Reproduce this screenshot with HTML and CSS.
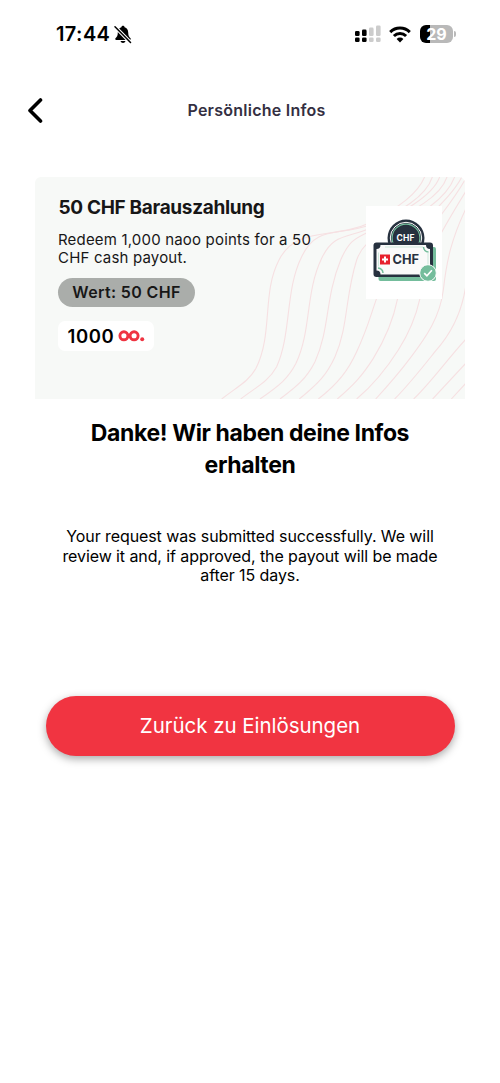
FILE: index.html
```html
<!DOCTYPE html>
<html lang="de">
<head>
<meta charset="utf-8">
<title>Persönliche Infos</title>
<link rel="stylesheet" href="styles.css">
</head>
<body>
<div class="status">
  <div class="clock"><span class="time">17:44</span>
    <svg class="bell" width="18" height="19" viewBox="0 0 18 19"><path d="M9 .8c-.9 0-1.500.6-1.600 1.400C5 3 3.800 5 3.800 7.500c0 3.500-1 4.500-2.300 5.800-.6.700-.2 1.700.7 1.700h13.600c.9 0 1.300-1 .7-1.700-1.300-1.300-2.300-2.300-2.300-5.800 0-2.500-1.200-4.500-3.600-5.300C10.500 1.400 9.900.8 9 .8z"/><path d="M6.500 16h5c-.3 1.300-1.300 2-2.500 2s-2.200-.7-2.500-2z"/><path d="M1 1.800l15.500 15.700" stroke="#fff" stroke-width="3.600"/><path d="M1 1.800l15.500 15.700" stroke="#000" stroke-width="1.500" stroke-linecap="round"/></svg>
  </div>
  <div class="indicators">
    <svg class="signal" width="26" height="18" viewBox="0 0 26 18"><g fill="#000"><rect x="0" y="6" width="4.600" height="5" rx="1.300"/><rect x="7" y="4.600" width="4.600" height="6.400" rx="1.300"/><rect x="0" y="12.500" width="4.600" height="4.600" rx="1.300"/><rect x="7" y="12.500" width="4.600" height="4.600" rx="1.300"/></g><g fill="#ccc"><rect x="14" y="2.600" width="4.600" height="8.400" rx="1.300"/><rect x="21" y="0.400" width="4.600" height="10.600" rx="1.300"/><rect x="14" y="12.500" width="4.600" height="4.600" rx="1.300"/><rect x="21" y="12.500" width="4.600" height="4.600" rx="1.300"/></g></svg>
    <svg class="wifi" width="22" height="17" viewBox="0 0 22 17"><g fill="none" stroke="#000" stroke-width="3"><path d="M1.200 6.100a14 14 0 0 1 19.600 0"/><path d="M4.900 10a8.700 8.700 0 0 1 12.200 0"/></g><path d="M11 16.400l-3.400-3.500a4.900 4.900 0 0 1 6.800 0z"/></svg>
    <div class="battery"><span class="level">29</span></div><i class="nub"></i>
  </div>
</div>
<header class="header">
  <svg class="back" width="16" height="26" viewBox="0 0 16 26"><path d="M13.500 3L3 13.500 13.500 24" fill="none" stroke="#000" stroke-width="3.600" stroke-linecap="round" stroke-linejoin="round"/></svg>
  <h1 class="title">Persönliche Infos</h1>
</header>
<main class="content">
  <section class="card">
    <svg class="waves" width="430" height="222" viewBox="35 177 430 222"><g transform="translate(210 170) scale(.33333)" fill="none" stroke="#f6e0e2" stroke-width="3.300">
      <path d="M35 687C85 648 115 635 138 595C190 490 155 370 207 270C260 165 370 210 480 158C570 110 625 70 645 18"/>
      <path d="M92 687C140 650 175 635 200 590C245 490 225 360 275 260C320 165 380 200 480 165C570 125 650 80 668 18"/>
      <path d="M150 687C210 645 235 625 258 580C305 480 285 370 335 265C370 190 410 205 480 175C570 130 670 80 690 18"/>
      <path d="M210 687C260 650 290 625 315 575C360 475 345 385 392 270C420 205 440 205 480 183C590 130 690 90 712 18"/>
      <path d="M268 687C325 640 350 615 375 560C415 470 405 380 440 270C460 215 490 210 540 180C620 140 710 90 735 18"/>
      <path d="M325 687C385 640 415 600 440 545C475 470 480 440 500 385C540 200 700 130 757 18"/>
      <path d="M382 687C430 645 455 620 490 565C530 500 550 450 563 385C600 220 705 140 768 24"/>
      <path d="M440 687C490 645 530 595 565 540C600 485 620 430 630 385C640 270 690 190 768 63"/>
      <path d="M497 687C540 640 570 605 600 565C650 500 690 440 700 360C710 270 725 205 768 115"/>
      <path d="M554 687C600 640 635 595 675 545C725 490 755 430 767 350"/>
      <path d="M611 687C665 635 710 570 768 507M668 687L768 579M724 687L768 639"/>
    </g></svg>
    <div class="info">
      <h2 class="name">50 CHF Barauszahlung</h2>
      <p class="desc">Redeem 1,000 naoo points for a 50<br>CHF cash payout.</p>
      <div class="value">Wert: 50 CHF</div>
      <div class="points"><span>1000</span><svg width="27" height="12" viewBox="0 0 27 12"><g fill="none" stroke="#ef3442" stroke-width="2.900"><circle cx="5.900" cy="5.800" r="4"/><circle cx="16.100" cy="5.800" r="4"/></g><circle cx="24.200" cy="9.200" r="2" fill="#ef3442"/></svg></div>
    </div>
    <svg class="voucher" width="76" height="93" viewBox="366 205.500 76 93"><path fill="#fff" d="M366 205h76v94h-76z"/>
      <circle cx="406" cy="237.500" r="18.500" fill="#27313f"/><circle cx="406" cy="237.500" r="15.700" fill="none" stroke="#fff" stroke-width="1"/><circle cx="406" cy="237.500" r="13.900" fill="none" stroke="#74bd9c" stroke-width="1.200"/>
      <path d="M395 233h22v8h-22z" fill="#27313f"/>
      <text x="405.600" y="240.200" class="coin-text">CHF</text>
      <rect x="378.500" y="246.500" width="57.500" height="34" rx="2" fill="#74bd9c"/>
      <rect x="373.500" y="242" width="59.500" height="34.500" rx="3" fill="#27313f"/>
      <path d="M380.500 244.500h45.500a4 4 0 0 0 4 4v21.500a4 4 0 0 0-4 4h-45.500a4 4 0 0 0-4-4v-21.500a4 4 0 0 0 4-4z" fill="#fafafa"/>
      <path d="M423.500 246.500a5.500 5.500 0 0 0 5 5M378 267.500a5.500 5.500 0 0 1 5 5" fill="none" stroke="#74bd9c" stroke-width="1.500"/>
      <path d="M378.500 266v-14M423 246.500h-38M428 252v14" stroke="#b9dfcf" stroke-width=".7"/>
      <rect x="380" y="254" width="10" height="10" fill="#e7202d"/><path d="M385 256v6M382 259h6" stroke="#fff" stroke-width="2"/>
      <text x="405.800" y="263.500" class="note-text">CHF</text>
      <circle cx="428" cy="272.500" r="8.300" fill="#74bd9c" stroke="#fff"/><path d="M424.200 272.600l2.700 2.700 5-5.500" fill="none" stroke="#fff" stroke-width="1.700"/>
    </svg>
  </section>
  <h2 class="thanks">Danke! Wir haben deine Infos<br>erhalten</h2>
  <p class="message">Your request was submitted successfully. We will<br>review it and, if approved, the payout will be made<br>after 15 days.</p>
  <button class="action">Zurück zu Einlösungen</button>
</main>
</body>
</html>
```
FILE: styles.css
```css
* { box-sizing: border-box; margin: 0; padding: 0; }
body { width: 500px; min-height: 1083px; background: #fff; color: #000; font-family: Inter, "Liberation Sans", sans-serif; }
svg { display: block; flex: none; }
.status { height: 68px; display: flex; justify-content: space-between; padding: 0 44px 0 56px; align-items: center; }
.clock { display: flex; align-items: center; gap: 4px; }
.time { font-size: 20px; font-weight: 600; line-height: 24px; letter-spacing: .4px; }
.indicators { display: flex; align-items: center; }
.wifi { margin: 0 9px 0 8px; }
.battery { width: 33px; height: 18px; border-radius: 6px; background: linear-gradient(90deg, #000 30%, #b9b9b9 30%); text-align: center; }
.level { color: #fff; font-size: 16px; line-height: 18px; font-weight: 700; display: block; }
.nub { width: 2px; height: 6px; background: #b9b9b9; border-radius: 0 2px 2px 0; margin-left: 1px; }
.header { height: 84px; display: grid; grid-template-columns: 60px 1fr 60px; align-items: center; padding: 0 14px 0 27px; }
.title { font-size: 16px; line-height: 20px; font-weight: 600; letter-spacing: .25px; color: #342f42; text-align: center; }
.content { padding: 25px 35px 0; }
.card { height: 221.500px; background: #f7f9f7; border-radius: 6px 6px 0 0; display: grid; grid-template-columns: 331px 76px; overflow: hidden; }
.waves, .info, .voucher { grid-row: 1; }
.waves { grid-column: 1 / 3; }
.info { grid-column: 1; padding: 18px 0 0 23px; z-index: 1; color: #171717; }
.voucher { grid-column: 2; margin-top: 28.500px; z-index: 1; }
.name { margin-left: .5px; font-size: 19px; line-height: 25px; font-weight: 700; letter-spacing: -.33px; white-space: nowrap; }
.desc { font-size: 15px; line-height: 18px; margin-top: 11px; letter-spacing: .18px; white-space: nowrap; }
.value { width: 137px; height: 29px; margin-top: 11px; border-radius: 15px; background: #aaadaa; font-size: 16px; line-height: 29px; font-weight: 600; letter-spacing: .36px; text-align: center; white-space: nowrap; }
.points { width: 96px; height: 30px; margin-top: 14px; padding-left: 9.500px; border-radius: 7px; background: #fff; display: flex; align-items: center; gap: 4px; font-size: 18.500px; font-weight: 600; letter-spacing: .6px; color: #000; }
.coin-text { font: 700 8.500px Inter, sans-serif; fill: #fff; text-anchor: middle; letter-spacing: .2px; }
.note-text { font: 700 12.800px Inter, sans-serif; fill: #27313f; text-anchor: middle; }
.thanks { margin-top: 18.500px; font-size: 23px; line-height: 32px; font-weight: 700; letter-spacing: -.38px; text-align: center; white-space: nowrap; }
.message { margin-top: 46px; font-size: 16px; line-height: 19.500px; letter-spacing: -.09px; text-align: center; white-space: nowrap; }
.action { display: block; width: 409px; height: 60px; margin: 110px 0 0 10.500px; border: 0; border-radius: 30px; background: #f13441; color: #fff; font: 400 20.500px/56px Inter, sans-serif; letter-spacing: -.04px; box-shadow: 0 3px 9px rgba(0, 0, 0, .34); }
```
